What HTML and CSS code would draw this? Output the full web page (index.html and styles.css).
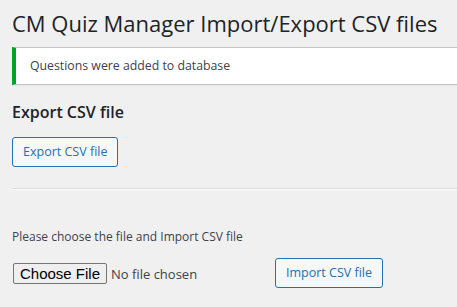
FILE: index.html
```html
<!DOCTYPE html>
<html lang="en">
<head>
  <meta charset="UTF-8" />
  <title>CM Quiz Manager Import/Export CSV files</title>
  <link rel="stylesheet" href="styles.css">
</head>
<body>
  <div class="wrap">
    <h1>CM Quiz Manager Import/Export CSV files</h1>

    <div class="notice notice-success">
      <p>Questions were added to database</p>
    </div>

    <h2>Export CSV file</h2>
    <form class="export-form">
      <button type="button" class="button">Export CSV file</button>
    </form>

    <hr>

    <form class="import-form">
      <p>Please choose the file and Import CSV file</p>
      <div class="import-row">
        <input type="file" class="file-input">
        <button type="button" class="button">Import CSV file</button>
      </div>
    </form>
  </div>
</body>
</html>
```

FILE: styles.css
```css
body {
  margin: 0;
  background: #f0f0f1;
  color: #3c434a;
  font-family: "Open Sans", "Noto Sans", sans-serif;
  font-size: 13px;
  line-height: 1.4;
}

.wrap {
  padding: 0 0 0 12px;
}

h1 {
  margin: 0;
  padding: 9px 0 4px;
  font-size: 22px;
  font-weight: 400;
  line-height: 1.3;
  color: #1d2327;
}

.notice {
  background: #fff;
  border: 1px solid #c3c4c7;
  border-left: 4px solid #00a32a;
  border-right: none;
  box-shadow: 0 1px 1px rgba(0,0,0,0.04);
  margin: 5px 0 15px;
  padding: 1px 12px;
}

.notice p {
  margin: 6px 0;
  padding: 2px;
  font-size: 12.3px;
  line-height: 1.5;
}

h2 {
  margin: 16px 0 14px;
  font-size: 16px;
  font-weight: 600;
  color: #1d2327;
}

.button {
  display: inline-block;
  min-height: 30px;
  padding: 0 10px;
  font-family: inherit;
  font-size: 12.5px;
  line-height: 28px;
  color: #2271b1;
  background: #f6f7f7;
  border: 1px solid #2271b1;
  border-radius: 3px;
  cursor: pointer;
}

hr {
  margin: 21px 0 0;
  border: 0;
  border-top: 1px solid #dcdcde;
  border-bottom: 1px solid #fff;
}

.import-form p {
  margin: 39px 0 12px;
  font-size: 12px;
}

.import-row {
  display: flex;
  align-items: center;
}

.file-input {
  width: 262px;
  margin-left: 1px;
  font-family: inherit;
  font-size: 13px;
  color: #3c434a;
}

.file-input::file-selector-button {
  font-family: "Liberation Sans", Arial, sans-serif;
  font-size: 15px;
  color: #000;
  background: #efefef;
  border: 1px solid #767676;
  border-radius: 2px;
  padding: 1px 6px;
  margin-right: 4px;
}
```
